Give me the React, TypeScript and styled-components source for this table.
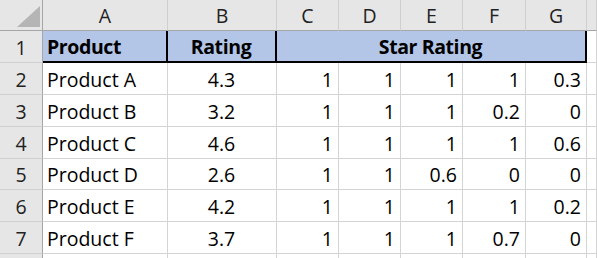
import React from 'react';
import styled, { createGlobalStyle, css } from 'styled-components';

const GlobalStyle = createGlobalStyle`
  html, body {
    margin: 0;
    padding: 0;
    background: #ffffff;
  }
  body {
    font-family: "Open Sans", "Noto Sans", "Liberation Sans", sans-serif;
  }
`;

const columns = ['A', 'B', 'C', 'D', 'E', 'F', 'G', ''];

const products = [
  { name: 'Product A', rating: '4.3', stars: ['1', '1', '1', '1', '0.3'] },
  { name: 'Product B', rating: '3.2', stars: ['1', '1', '1', '0.2', '0'] },
  { name: 'Product C', rating: '4.6', stars: ['1', '1', '1', '1', '0.6'] },
  { name: 'Product D', rating: '2.6', stars: ['1', '1', '0.6', '0', '0'] },
  { name: 'Product E', rating: '4.2', stars: ['1', '1', '1', '1', '0.2'] },
  { name: 'Product F', rating: '3.7', stars: ['1', '1', '1', '0.7', '0'] },
];

const App: React.FC = () => {
  return (
    <>
      <GlobalStyle />
      <Sheet>
        <Corner>
          <SelectAll />
        </Corner>
        {columns.map((c, i) => (
          <ColHeader key={c + i}>{c}</ColHeader>
        ))}

        <RowHeader>1</RowHeader>
        <Cell $fill $bold $edgeRight $edgeBottom>
          Product
        </Cell>
        <Cell $fill $bold $align="center" $edgeRight $edgeBottom>
          Rating
        </Cell>
        <Cell $fill $bold $align="center" $span={5} $edgeRight $edgeBottom>
          Star Rating
        </Cell>
        <Cell />

        {products.map((p, i) => (
          <React.Fragment key={p.name}>
            <RowHeader>{i + 2}</RowHeader>
            <Cell>{p.name}</Cell>
            <Cell $align="center">{p.rating}</Cell>
            {p.stars.map((s, j) => (
              <Cell key={j} $align="right">
                {s}
              </Cell>
            ))}
            <Cell />
          </React.Fragment>
        ))}

        <RowHeader />
        {columns.map((c, i) => (
          <Cell key={'last' + i} />
        ))}
      </Sheet>
    </>
  );
};
export default App;

const Sheet = styled.div`
  display: grid;
  grid-template-columns: 43px 125px 109px 62px 62px 62px 63px 61px 1fr;
  grid-template-rows: 31px 32px 32px 32px 32px 31px 32px 32px 1fr;
  width: 597px;
  height: 258px;
  overflow: hidden;
  font-size: 19.5px;
  color: #000000;
`;

const headerBase = css`
  box-sizing: border-box;
  background: #e6e6e6;
  color: #222222;
  display: flex;
  align-items: flex-end;
  justify-content: center;
  line-height: 20px;
`;

const Corner = styled.div`
  ${headerBase};
  justify-content: flex-end;
  border-right: 1px solid #a6a6a6;
  border-bottom: 1px solid #a6a6a6;
  padding: 0 2px 3px 0;
`;

const SelectAll = styled.div`
  width: 23px;
  height: 21px;
  background: #b5b5b5;
  clip-path: polygon(100% 0, 100% 100%, 0 100%);
`;

const ColHeader = styled.div`
  ${headerBase};
  border-right: 1px solid #cfcfcf;
  border-bottom: 1px solid #a6a6a6;
  padding-bottom: 4px;
`;

const RowHeader = styled.div`
  ${headerBase};
  border-right: 1px solid #a6a6a6;
  border-bottom: 1px solid #cfcfcf;
  padding-bottom: 4px;
`;

const Cell = styled.div<{
  $align?: 'left' | 'center' | 'right';
  $bold?: boolean;
  $fill?: boolean;
  $span?: number;
  $edgeRight?: boolean;
  $edgeBottom?: boolean;
}>`
  box-sizing: border-box;
  display: flex;
  align-items: flex-end;
  justify-content: ${(p) =>
    p.$align === 'center' ? 'center' : p.$align === 'right' ? 'flex-end' : 'flex-start'};
  padding: 0 5px 4px 4px;
  line-height: 20px;
  white-space: nowrap;
  font-weight: ${(p) => (p.$bold ? 700 : 400)};
  letter-spacing: ${(p) => (p.$bold ? '-0.4px' : 'normal')};
  background: ${(p) => (p.$fill ? '#b4c6e7' : '#ffffff')};
  grid-column: ${(p) => (p.$span ? `span ${p.$span}` : 'auto')};
  border-right: ${(p) => (p.$edgeRight ? '2px solid #000000' : '1px solid #d4d4d4')};
  border-bottom: ${(p) => (p.$edgeBottom ? '2px solid #000000' : '1px solid #d4d4d4')};
`;
